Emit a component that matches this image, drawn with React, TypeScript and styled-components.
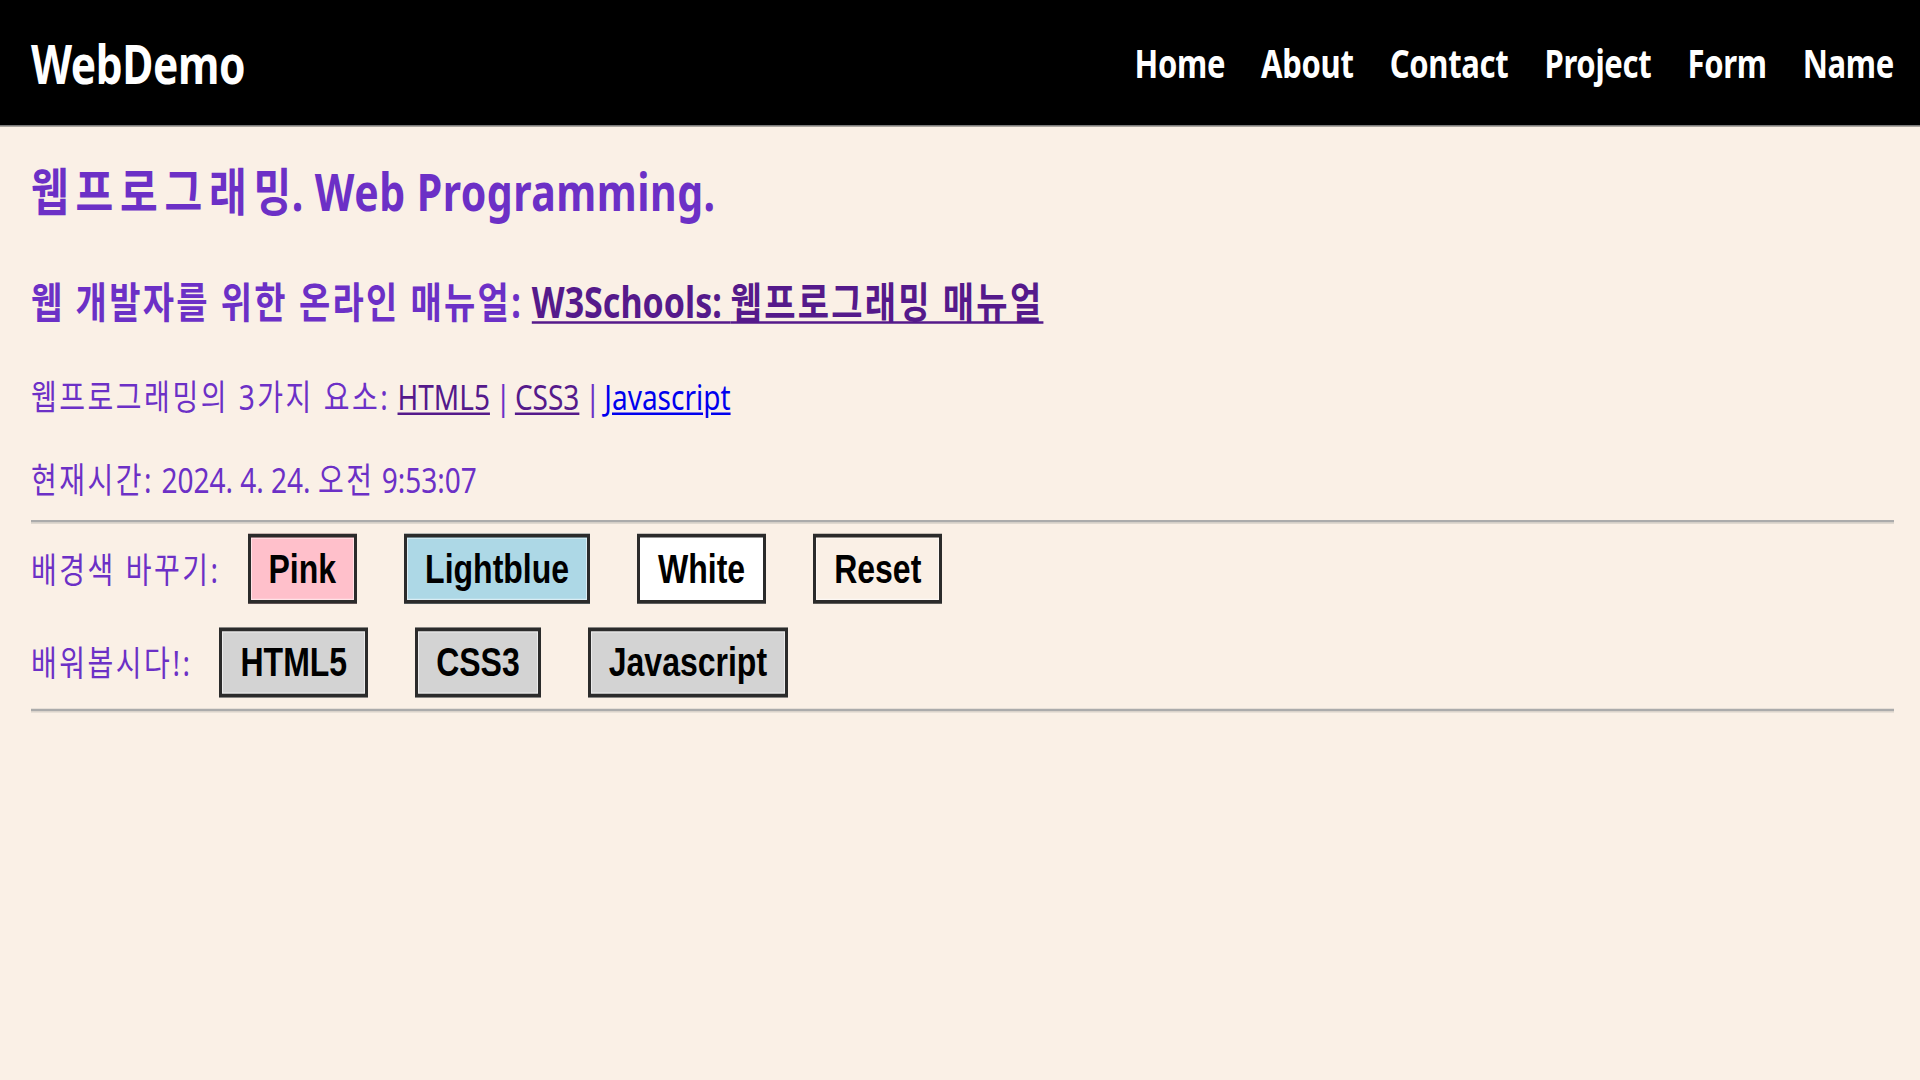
import React from "react";
import styled, { createGlobalStyle } from "styled-components";

const GlobalStyle = createGlobalStyle`
  html, body {
    margin: 0;
    padding: 0;
    background: #faf0e6;
    overflow: hidden;
  }
  body {
    font-family: "Noto Sans", "Noto Sans CJK KR", sans-serif;
  }
`;

const TEXT = "#6c30c6";
const VISITED = "#551a8b";

/* The reference is vertically stretched; the page is laid out at natural
   proportions and then stretched as a whole. */
const Stage = styled.div`
  width: 1920px;
  height: 864px;
  background: #faf0e6;
  transform: scaleY(1.25);
  transform-origin: 0 0;
  color: ${TEXT};
  font-family: "Noto Sans", "Noto Sans CJK KR", sans-serif;
`;

const NavBar = styled.header`
  box-sizing: border-box;
  height: 101px;
  background: #000;
  border-bottom: 1px solid #7a7a7a;
  display: flex;
  align-items: center;
  justify-content: space-between;
  padding: 0 26px 0 31px;
`;

const Brand = styled.div`
  color: #fff;
  font-size: 42.5px;
  font-weight: 700;
  letter-spacing: -0.4px;
`;

const NavList = styled.nav`
  display: flex;
  align-items: center;
  gap: 36px;
`;

const NavLink = styled.a`
  color: #fff;
  font-size: 31px;
  font-weight: 700;
  text-decoration: none;
  letter-spacing: -0.3px;
`;

/* Hangul runs are set a little wider, as in the reference's Korean face. */
const Ko = styled.span<{ $ls: number }>`
  letter-spacing: ${(p) => p.$ls}em;
`;

const Sep = styled.span`
  letter-spacing: -0.06em;
`;

const Main = styled.main`
  padding: 0 26px 0 31px;
`;

const Title = styled.h1`
  margin: 28px 0 0;
  font-size: 41px;
  line-height: 49px;
  font-weight: 700;
  letter-spacing: 0.5px;
  color: ${TEXT};
`;

const Subtitle = styled.h2`
  margin: 43px 0 0;
  font-size: 34px;
  line-height: 41px;
  font-weight: 700;
  color: ${TEXT};
`;

const SubLink = styled.a`
  color: ${VISITED};
  text-decoration: underline;
  text-decoration-thickness: 2px;
  text-underline-offset: 3px;
`;

const Text = styled.p<{ $gap: number }>`
  margin: ${(p) => p.$gap}px 0 0;
  font-size: 28px;
  line-height: 34px;
  font-weight: 400;
  color: ${TEXT};
`;

const InlineLink = styled.a<{ $visited?: boolean }>`
  color: ${(p) => (p.$visited ? VISITED : "#0000ee")};
  text-decoration: underline;
  text-underline-offset: 2px;
`;

const Divider = styled.hr<{ $gap: number }>`
  margin: ${(p) => p.$gap}px 0 0;
  border: 0;
  border-top: 2px solid #ababab;
  border-bottom: 1px solid #d6d0c8;
  height: 0;
`;

const ButtonRow = styled.div<{ $gap: number }>`
  display: flex;
  align-items: center;
  gap: 27px;
  margin-top: ${(p) => p.$gap}px;
`;

const RowLabel = styled.span`
  font-size: 28px;
  line-height: 34px;
  color: ${TEXT};
  letter-spacing: 0.09em;
`;

const ButtonGroup = styled.div`
  display: flex;
  align-items: center;
  gap: 47px;
`;

const ColorButton = styled.button<{ $bg: string }>`
  box-sizing: border-box;
  height: 56px;
  padding: 0 18px;
  border: 3px solid #2b2b2b;
  box-shadow: inset 0 0 0 1px rgba(255, 255, 255, 0.55);
  background: ${(p) => p.$bg};
  color: #000;
  font-family: "Liberation Sans", Arial, sans-serif;
  font-size: 32px;
  font-weight: 700;
  cursor: pointer;
`;

const colorButtons = [
  { label: "Pink", bg: "#ffc0cb" },
  { label: "Lightblue", bg: "#add8e6" },
  { label: "White", bg: "#ffffff" },
  { label: "Reset", bg: "#faf0e6" },
];

const learnButtons = ["HTML5", "CSS3", "Javascript"];

export default function App() {
  return (
    <>
      <GlobalStyle />
      <Stage>
        <NavBar>
          <Brand>WebDemo</Brand>
          <NavList>
            {["Home", "About", "Contact", "Project", "Form", "Name"].map((n) => (
              <NavLink key={n} href="#">
                {n}
              </NavLink>
            ))}
          </NavList>
        </NavBar>
        <Main>
          <Title>
            <Ko $ls={0.165}>웹프로그래</Ko>밍. Web Programming.
          </Title>
          <Subtitle>
            <Ko $ls={0.066}>웹 개발자를 위한 온라인 매뉴얼:</Ko>{" "}
            <SubLink href="#">
              W3Schools: <Ko $ls={0.066}>웹프로그래밍 매뉴얼</Ko>
            </SubLink>
          </Subtitle>
          <Text $gap={38}>
            <Ko $ls={0.09}>웹프로그래밍의 3가지 요소:</Ko>{" "}
            <InlineLink $visited href="#">
              HTML5
            </InlineLink>
            <Sep> | </Sep>
            <InlineLink $visited href="#">
              CSS3
            </InlineLink>
            <Sep> | </Sep>
            <InlineLink href="#">Javascript</InlineLink>
          </Text>
          <Text $gap={32}>
            <Ko $ls={0.09}>현재시간:</Ko> 2024. 4. 24. <Ko $ls={0.09}>오전</Ko> 9:53:07
          </Text>
          <Divider $gap={16} />
          <ButtonRow $gap={8}>
            <RowLabel>배경색 바꾸기:</RowLabel>
            <ButtonGroup>
              {colorButtons.map((b) => (
                <ColorButton key={b.label} $bg={b.bg}>
                  {b.label}
                </ColorButton>
              ))}
            </ButtonGroup>
          </ButtonRow>
          <ButtonRow $gap={19}>
            <RowLabel>배워봅시다!:</RowLabel>
            <ButtonGroup>
              {learnButtons.map((b) => (
                <ColorButton key={b} $bg="#d3d3d3">
                  {b}
                </ColorButton>
              ))}
            </ButtonGroup>
          </ButtonRow>
          <Divider $gap={9} />
        </Main>
      </Stage>
    </>
  );
}
